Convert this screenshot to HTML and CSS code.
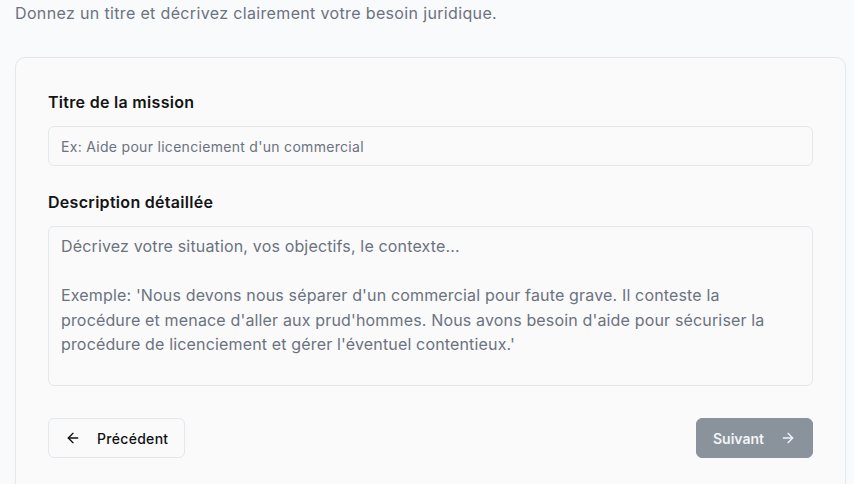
FILE: index.html
```html
<!DOCTYPE html>
<html lang="fr">
<head>
<meta charset="utf-8">
<title>Nouvelle mission</title>
<link rel="stylesheet" href="styles.css">
</head>
<body>
<p class="subtitle">Donnez un titre et décrivez clairement votre besoin juridique.</p>
<div class="card">
  <div class="field">
    <label class="label" for="titre">Titre de la mission</label>
    <input class="input" id="titre" type="text" placeholder="Ex: Aide pour licenciement d'un commercial">
  </div>
  <div class="field">
    <label class="label" for="desc">Description détaillée</label>
    <textarea class="textarea" id="desc" placeholder="Décrivez votre situation, vos objectifs, le contexte...&#10;&#10;Exemple: 'Nous devons nous séparer d'un commercial pour faute grave. Il conteste la procédure et menace d'aller aux prud'hommes. Nous avons besoin d'aide pour sécuriser la procédure de licenciement et gérer l'éventuel contentieux.'"></textarea>
  </div>
  <div class="actions">
    <button class="btn btn-outline" type="button">
      <svg class="icon" viewBox="0 0 24 24" fill="none" stroke="currentColor" stroke-width="2" stroke-linecap="round" stroke-linejoin="round"><path d="m12 19-7-7 7-7"/><path d="M19 12H5"/></svg>
      <span>Précédent</span>
    </button>
    <button class="btn btn-primary" type="button" disabled>
      <span>Suivant</span>
      <svg class="icon" viewBox="0 0 24 24" fill="none" stroke="currentColor" stroke-width="2" stroke-linecap="round" stroke-linejoin="round"><path d="M5 12h14"/><path d="m12 5 7 7-7 7"/></svg>
    </button>
  </div>
</div>
</body>
</html>
```

FILE: styles.css
```css
* { box-sizing: border-box; }
html, body { margin: 0; }
body {
  background: #f9fafb;
  font-family: "Inter", "Open Sans", sans-serif;
  color: #111827;
  padding: 1px 8px 0 15px;
}
.subtitle {
  margin: 0 0 32px;
  font-size: 16px;
  letter-spacing: 0.35px;
  line-height: 24px;
  color: #6b7280;
}
.card {
  background: #fafafb;
  border: 1px solid #e3e7ee;
  border-radius: 10px;
  padding: 32px 32px 40px;
}
.field { display: flex; flex-direction: column; }
.field + .field { margin-top: 24px; }
.label {
  font-size: 16px;
  letter-spacing: 0.3px;
  font-weight: 600;
  line-height: 24px;
  color: #141414;
  margin-bottom: 12px;
}
.input, .textarea {
  font-family: inherit;
  background: #fafafb;
  border: 1px solid #e3e7ee;
  border-radius: 6px;
  color: #111827;
  outline: none;
}
.input {
  height: 40px;
  padding: 0 12px;
  font-size: 14px;
  letter-spacing: 0.3px;
}
.textarea {
  height: 160px;
  padding: 7px 12px;
  font-size: 16px;
  letter-spacing: 0.16px;
  line-height: 24.5px;
  resize: none;
}
.input::placeholder, .textarea::placeholder { color: #6b7280; opacity: 1; }
.actions {
  margin-top: 32px;
  display: flex;
  justify-content: space-between;
}
.btn {
  height: 40px;
  display: inline-flex;
  align-items: center;
  gap: 16px;
  padding: 0 16px;
  border-radius: 6px;
  font-family: inherit;
  font-size: 14px;
  letter-spacing: 0.3px;
}
.btn-outline {
  background: #fafafb;
  border: 1px solid #e3e7ee;
  color: #111;
  font-weight: 500;
}
.btn-primary {
  background: #8a929c;
  border: 1px solid #8a929c;
  color: #f3f4f6;
  font-weight: 600;
  letter-spacing: 0;
}
.icon { width: 16px; height: 16px; flex: none; }
```
